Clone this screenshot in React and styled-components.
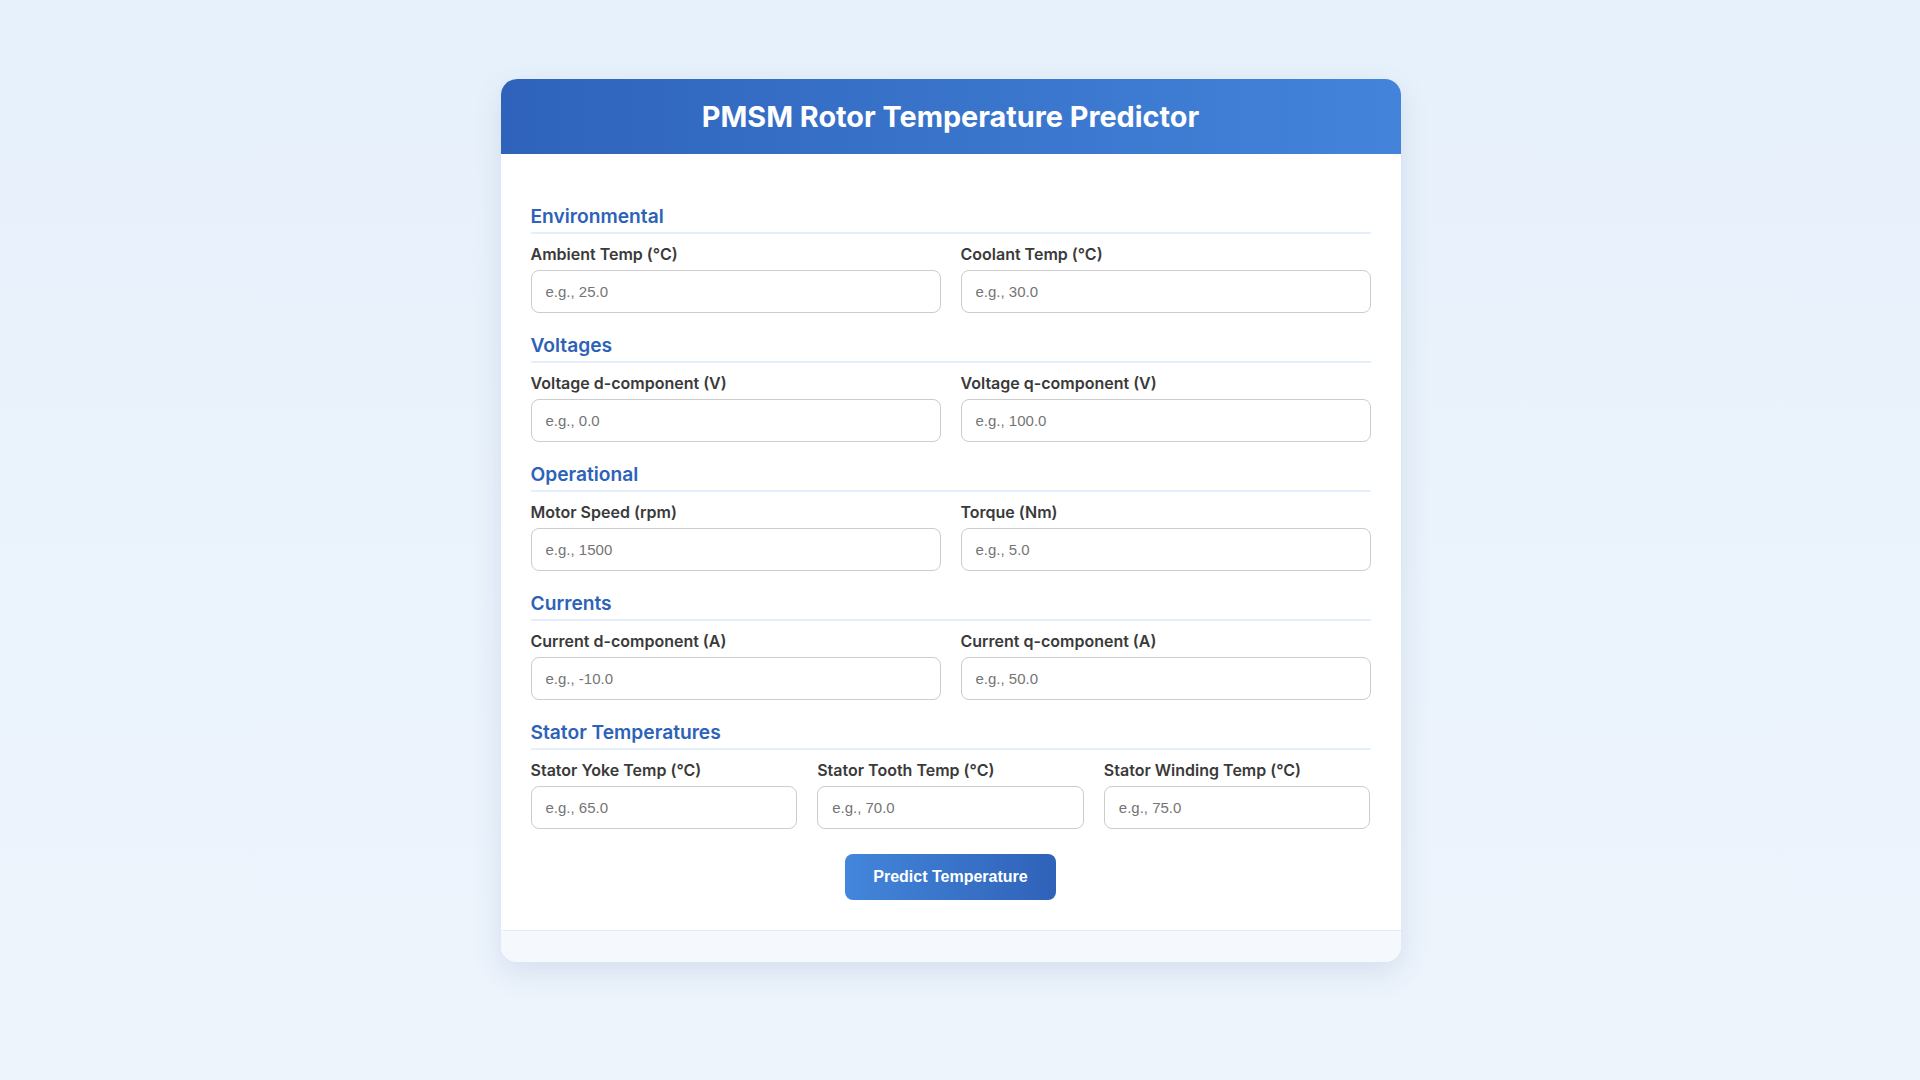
import React from "react";
import styled, { createGlobalStyle } from "styled-components";

const GlobalStyle = createGlobalStyle`
  * {
    box-sizing: border-box;
  }

  body {
    margin: 0;
    /* right side leaves room the way a classic scrollbar would */
    padding: 40px 39px 40px 20px;
    min-height: 100vh;
    font-family: Inter, "Noto Sans", sans-serif;
    background: linear-gradient(180deg, #e7f1fb 0%, #eef4fc 100%);
    box-sizing: content-box;
  }
`;

const StyledCard = styled.div`
  max-width: 900px;
  margin: 39px auto 40px;
  background-color: #ffffff;
  border-radius: 16px;
  overflow: hidden;
  box-shadow: 0 10px 30px rgba(40, 80, 140, 0.12);
`;

const StyledHeader = styled.header`
  padding: 20px 30px;
  background: linear-gradient(90deg, #2f63bb 0%, #4384da 100%);
  text-align: center;
`;

const StyledTitle = styled.h1`
  margin: 0;
  color: #ffffff;
  font-size: 28.8px;
  font-weight: 700;
`;

const StyledForm = styled.form`
  padding: 50px 30px 30px;
`;

const StyledSection = styled.section`
  margin-bottom: 20px;
`;

const StyledSectionTitle = styled.h3`
  margin: 0 0 10px;
  padding-bottom: 4px;
  border-bottom: 2px solid #e4effb;
  color: #2d62b9;
  font-size: 19.2px;
  font-weight: 600;
`;

const StyledGrid = styled.div`
  display: grid;
  grid-template-columns: repeat(${(props) => props.$cols}, 1fr);
  gap: 20px;
`;

const StyledField = styled.div`
  display: flex;
  flex-direction: column;
`;

const StyledLabel = styled.label`
  margin-bottom: 6px;
  color: #3a3a3a;
  font-size: 16px;
  font-weight: 600;
`;

const StyledInput = styled.input`
  width: 100%;
  height: 43px;
  padding: 0 14px;
  border: 1px solid #cccccc;
  border-radius: 8px;
  background: #ffffff;
  color: #333333;
  font-family: "Liberation Sans", Arial, sans-serif;
  font-size: 15px;
  outline: none;

  &::placeholder {
    color: #757575;
  }
`;

const StyledActions = styled.div`
  display: flex;
  justify-content: center;
  padding-top: 5px;
`;

const StyledButton = styled.button`
  height: 46px;
  padding: 0 28px;
  border: none;
  border-radius: 8px;
  background: linear-gradient(90deg, #4386db 0%, #2f62b8 100%);
  color: #ffffff;
  font-family: "Liberation Sans", Arial, sans-serif;
  font-size: 16px;
  font-weight: 700;
  cursor: pointer;
`;

const StyledFooter = styled.div`
  height: 32px;
  border-top: 1px solid #e3eefa;
  background-color: #f5f8fd;
`;

const sections = [
  {
    title: "Environmental",
    fields: [
      { label: "Ambient Temp (°C)", placeholder: "e.g., 25.0" },
      { label: "Coolant Temp (°C)", placeholder: "e.g., 30.0" },
    ],
  },
  {
    title: "Voltages",
    fields: [
      { label: "Voltage d-component (V)", placeholder: "e.g., 0.0" },
      { label: "Voltage q-component (V)", placeholder: "e.g., 100.0" },
    ],
  },
  {
    title: "Operational",
    fields: [
      { label: "Motor Speed (rpm)", placeholder: "e.g., 1500" },
      { label: "Torque (Nm)", placeholder: "e.g., 5.0" },
    ],
  },
  {
    title: "Currents",
    fields: [
      { label: "Current d-component (A)", placeholder: "e.g., -10.0" },
      { label: "Current q-component (A)", placeholder: "e.g., 50.0" },
    ],
  },
  {
    title: "Stator Temperatures",
    fields: [
      { label: "Stator Yoke Temp (°C)", placeholder: "e.g., 65.0" },
      { label: "Stator Tooth Temp (°C)", placeholder: "e.g., 70.0" },
      { label: "Stator Winding Temp (°C)", placeholder: "e.g., 75.0" },
    ],
  },
];

const App = () => {
  return (
    <>
      <GlobalStyle />
      <StyledCard>
        <StyledHeader>
          <StyledTitle>PMSM Rotor Temperature Predictor</StyledTitle>
        </StyledHeader>

        <StyledForm onSubmit={(e) => e.preventDefault()}>
          {sections.map((section) => (
            <StyledSection key={section.title}>
              <StyledSectionTitle>{section.title}</StyledSectionTitle>
              <StyledGrid $cols={section.fields.length}>
                {section.fields.map((field) => (
                  <StyledField key={field.label}>
                    <StyledLabel>{field.label}</StyledLabel>
                    <StyledInput type="number" placeholder={field.placeholder} />
                  </StyledField>
                ))}
              </StyledGrid>
            </StyledSection>
          ))}

          <StyledActions>
            <StyledButton type="submit">Predict Temperature</StyledButton>
          </StyledActions>
        </StyledForm>

        <StyledFooter />
      </StyledCard>
    </>
  );
};

export default App;
